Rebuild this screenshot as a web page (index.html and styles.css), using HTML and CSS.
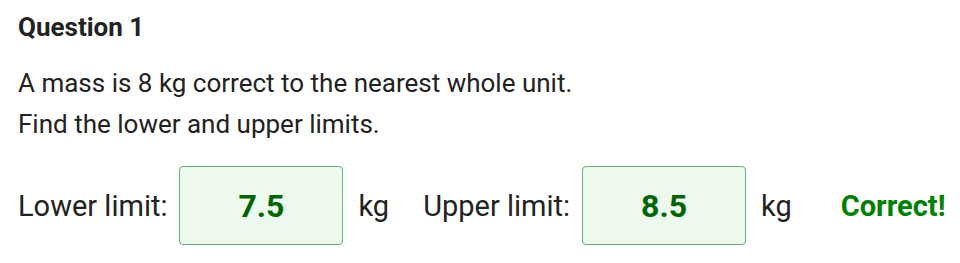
FILE: index.html
```html
<!DOCTYPE html>
<html lang="en">
<head>
    <meta charset="UTF-8">
    <meta name="viewport" content="width=device-width, initial-scale=1.0">
    <title>Question 1</title>
    <link rel="stylesheet" href="styles.css">
</head>
<body>
    <div class="question">
        <h2>Question 1</h2>

        <p>A mass is 8 kg correct to the nearest whole unit.</p>
        <p>Find the lower and upper limits.</p>

        <div class="answer-row">
            <label for="lower">Lower limit:</label>
            <input type="text" id="lower" class="answer correct" value="7.5">
            <span class="unit">kg</span>

            <label for="upper">Upper limit:</label>
            <input type="text" id="upper" class="answer correct" value="8.5">
            <span class="unit">kg</span>

            <span class="feedback">Correct!</span>
        </div>
    </div>
</body>
</html>
```

FILE: styles.css
```css
body {
    font-family: Roboto, "Liberation Sans", Arial, sans-serif;
    margin: 0;
    padding: 0 0 0 18px;
    background-color: #fff;
    color: #222;
}
h2 {
    font-size: 26px;
    font-weight: bold;
    margin: 12px 0 21px;
}
p {
    font-size: 26px;
    margin: 0;
    line-height: 41px;
}
.answer-row {
    display: flex;
    align-items: center;
    margin-top: 21px;
    font-size: 29px;
    white-space: nowrap;
}
.answer-row > * {
    flex-shrink: 0;
}
.answer {
    width: 164px;
    height: 79px;
    box-sizing: border-box;
    margin-left: 12px;
    border: 1px solid #5fb37c;
    border-radius: 4px;
    background-color: #ecf9ec;
    font-family: inherit;
    font-size: 32px;
    font-weight: bold;
    color: #006400;
    text-align: center;
}
.unit {
    margin-left: 15px;
    margin-right: 34px;
}
.feedback {
    margin-left: 15px;
    font-weight: bold;
    color: #008000;
}
```
